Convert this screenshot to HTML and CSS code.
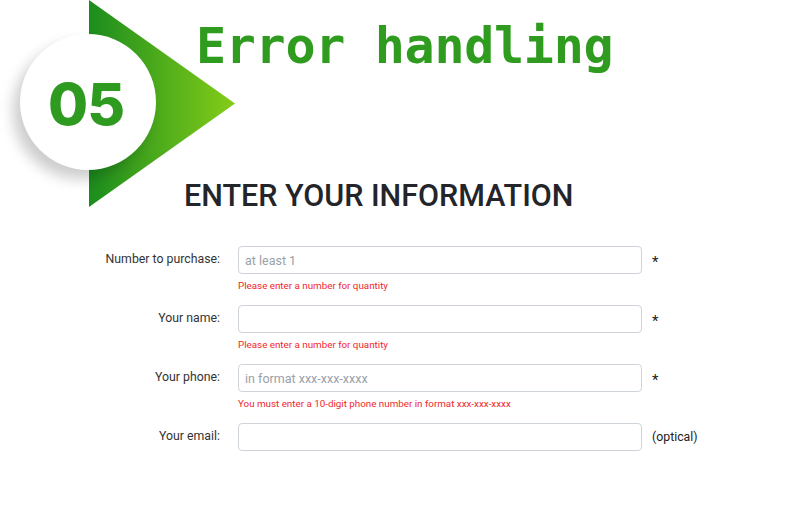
FILE: index.html
```html
<!DOCTYPE html>
<html lang="en">
<head>
<meta charset="utf-8">
<title>Error handling</title>
<link rel="stylesheet" href="styles.css">
</head>
<body>
<div class="page">
  <header class="hero">
    <svg class="hero-arrow" width="240" height="210" viewBox="0 0 240 210" aria-hidden="true">
      <defs>
        <linearGradient id="arrowGrad" x1="0" y1="0" x2="1" y2="0">
          <stop offset="0" stop-color="#1b8c1e"/>
          <stop offset="1" stop-color="#84cd18"/>
        </linearGradient>
      </defs>
      <polygon points="89,0 235,103.5 89,207" fill="url(#arrowGrad)"/>
    </svg>
    <div class="hero-badge">05</div>
    <h1 class="hero-title">Error handling</h1>
  </header>

  <h2 class="form-heading">ENTER YOUR INFORMATION</h2>

  <form class="info-form">
    <div class="field">
      <div class="field-row">
        <label class="field-label">Number to purchase:</label>
        <input class="field-input" type="text" placeholder="at least 1">
        <span class="field-suffix req">*</span>
      </div>
      <div class="field-error">Please enter a number for quantity</div>
    </div>
    <div class="field">
      <div class="field-row">
        <label class="field-label">Your name:</label>
        <input class="field-input" type="text">
        <span class="field-suffix req">*</span>
      </div>
      <div class="field-error">Please enter a number for quantity</div>
    </div>
    <div class="field">
      <div class="field-row">
        <label class="field-label">Your phone:</label>
        <input class="field-input" type="text" placeholder="in format xxx-xxx-xxxx">
        <span class="field-suffix req">*</span>
      </div>
      <div class="field-error">You must enter a 10-digit phone number in format xxx-xxx-xxxx</div>
    </div>
    <div class="field">
      <div class="field-row">
        <label class="field-label">Your email:</label>
        <input class="field-input" type="text">
        <span class="field-suffix">(optical)</span>
      </div>
    </div>
  </form>
</div>
</body>
</html>
```
FILE: styles.css
```css
* { box-sizing: border-box; }

html, body {
  margin: 0;
  padding: 0;
  background: #ffffff;
}

body {
  font-family: Roboto, "Liberation Sans", Arial, sans-serif;
  color: #222;
  width: 800px;
  height: 522px;
  overflow: hidden;
}

.page {
  position: relative;
}

.hero {
  position: relative;
  height: 178px;
}

.hero-arrow {
  position: absolute;
  left: 0;
  top: 0;
}

.hero-badge {
  position: absolute;
  left: 20px;
  top: 34px;
  width: 136px;
  height: 136px;
  border-radius: 50%;
  background: #ffffff;
  box-shadow: -7px 9px 14px rgba(0, 0, 0, 0.2);
  display: flex;
  align-items: center;
  justify-content: center;
  font-family: Inter, "Open Sans", sans-serif;
  font-weight: 800;
  font-size: 58px;
  letter-spacing: -1px;
  color: #2e9a20;
  padding-top: 4px;
  padding-right: 4px;
}

.hero-title {
  position: relative;
  margin: 0;
  padding: 21px 0 0 196px;
  font-family: "DejaVu Sans Mono", "Liberation Mono", monospace;
  font-weight: bold;
  font-size: 50px;
  line-height: 50px;
  letter-spacing: -0.3px;
  color: #2f9b1f;
}

.form-heading {
  margin: 0 0 32px 184px;
  font-family: Roboto, "Liberation Sans", sans-serif;
  font-weight: 500;
  font-size: 30.5px;
  line-height: 36px;
  color: #23252a;
}

.info-form {
  display: flex;
  flex-direction: column;
  gap: 12px;
}

.field {
  display: flex;
  flex-direction: column;
}

.field-row {
  display: flex;
  align-items: center;
  height: 28px;
}

.field-label {
  width: 220px;
  text-align: right;
  font-size: 12.3px;
  color: #333;
  padding-bottom: 2px;
}

.field-input {
  margin-left: 18px;
  width: 404px;
  height: 28px;
  border: 1px solid #cfd4db;
  border-radius: 4px;
  padding: 0 6px;
  font-family: Roboto, "Liberation Sans", sans-serif;
  font-size: 12.5px;
  color: #333;
  background: #fff;
  outline: none;
}

.field-input::placeholder {
  color: #9aa0a8;
}

.field-suffix {
  margin-left: 10px;
  font-size: 12.3px;
  color: #222;
}

.field-suffix.req {
  font-size: 15px;
  padding-top: 3px;
}

.field-error {
  margin: 5px 0 0 238px;
  font-size: 9.8px;
  line-height: 14px;
  color: #f0272b;
}
```
